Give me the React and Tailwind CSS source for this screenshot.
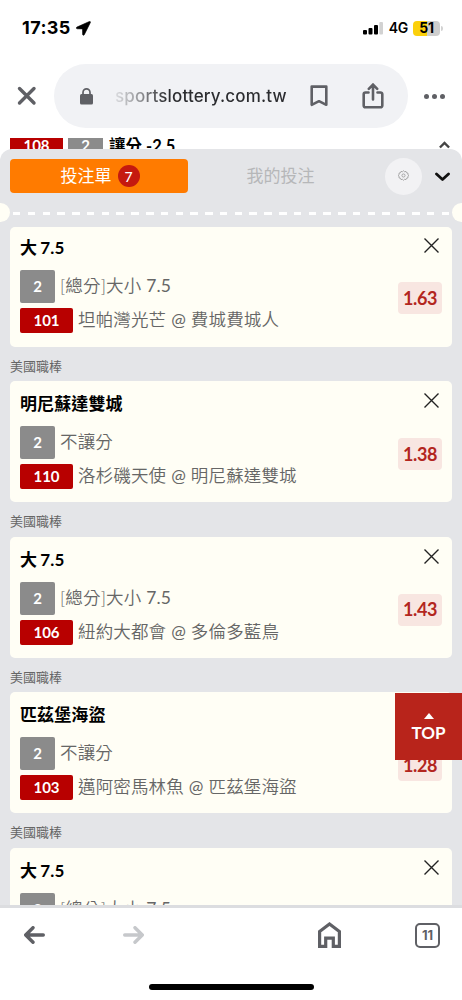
import clsx from "clsx";

const bets = [
  { id: 1, title: "大 7.5", market: "[總分]大小 7.5", code: "101", match: "坦帕灣光芒 @ 費城費城人", odds: "1.63" },
  { id: 2, title: "明尼蘇達雙城", market: "不讓分", code: "110", match: "洛杉磯天使 @ 明尼蘇達雙城", odds: "1.38" },
  { id: 3, title: "大 7.5", market: "[總分]大小 7.5", code: "106", match: "紐約大都會 @ 多倫多藍鳥", odds: "1.43" },
  { id: 4, title: "匹茲堡海盜", market: "不讓分", code: "103", match: "邁阿密馬林魚 @ 匹茲堡海盜", odds: "1.28" },
  { id: 5, title: "大 7.5", market: "[總分]大小 7.5" }
];

function StatusBar() {
  return (
    <div className="flex h-14 shrink-0 items-center pl-[22px] pr-[19px] text-black">
      <span className="text-[18px] font-bold leading-none tracking-[0.4px]">17:35</span>
      <svg className="ml-[5px] h-[15px] w-[15px]" viewBox="0 0 15 15" fill="#000">
        <path d="M13.400.5.9 6.100c-.9.400-.7 1.700.3 1.700l5.300.1.1 5.400c0 1 1.300 1.300 1.700.4L14.400 1.500c.3-.7-.3-1.300-1-1z" stroke="#000" strokeWidth=".6" />
      </svg>
      <svg className="ml-auto h-[14px] w-[20px]" viewBox="0 0 20 14">
        <rect x="0" y="9" width="4" height="4.500" rx="1" />
        <rect x="5.500" y="7" width="4" height="6.500" rx="1" />
        <rect x="11" y="4" width="4" height="9.500" rx="1" />
        <rect x="16.300" y="1" width="3.700" height="12.500" rx="1" fill="#d2d2d2" />
      </svg>
      <span className="ml-[6px] text-[14px] font-semibold leading-none tracking-[-0.3px]">4G</span>
      <div className="ml-[5px] flex h-[15px] w-[27px] items-center justify-center rounded-[4px] bg-[linear-gradient(90deg,#fbd00c_52%,#cecece_52%)] text-[14px] font-bold leading-none tracking-[-0.3px]">
        51
      </div>
      <div className="ml-px h-[5px] w-[2px] rounded-r bg-[#d2d2d2]" />
    </div>
  );
}

function AddressBar() {
  return (
    <div className="flex h-[82px] shrink-0 items-center pb-[2px]">
      <svg className="ml-[17px] h-[20px] w-[20px]" viewBox="0 0 20 20" stroke="#5f6065" strokeWidth="3.400" strokeLinecap="round">
        <path d="M2.500 2.500l14.500 14.500M17 2.500 2.500 17" />
      </svg>
      <div className="ml-[17px] flex h-16 w-[354px] items-center rounded-full bg-[#f1f2f5]">
        <svg className="ml-[26px] h-[17px] w-[13px]" viewBox="0 0 13 17">
          <rect y="6" width="13" height="10.500" rx="1.500" fill="#5f6065" />
          <path d="M3 6.500V4.400a3.500 3.500 0 0 1 7 0v2.100" fill="none" stroke="#5f6065" strokeWidth="1.700" />
        </svg>
        <span className="ml-[22px] w-[173px] whitespace-nowrap bg-[linear-gradient(90deg,#dcdde0_0%,#96979a_14%,#2b2c2f_30%)] bg-clip-text text-[17px] font-medium leading-6 tracking-[0.16px] text-transparent">
          sportslottery.com.tw
        </span>
        <svg className="ml-[22px] h-[22px] w-[18px]" viewBox="0 0 18 22" fill="none" stroke="#5f6065" strokeWidth="2.600" strokeLinejoin="round">
          <path d="M1.700 1.600h14.600v18.200L9 16.200l-7.300 3.600z" />
        </svg>
        <svg className="ml-[34px] h-[26px] w-[22px]" viewBox="0 0 22 26" fill="none" stroke="#5f6065" strokeWidth="2.600" strokeLinecap="round">
          <path d="M6.500 9.500h-3a1.800 1.800 0 0 0-1.800 1.800v11.200a1.800 1.800 0 0 0 1.800 1.800h15a1.800 1.800 0 0 0 1.800-1.800V11.300a1.800 1.800 0 0 0-1.800-1.800h-3M11 16.500V2M6.800 5.800 11 1.600l4.200 4.200" />
        </svg>
      </div>
      <div className="ml-[16px] flex gap-[3px]">
        <i className="size-[5px] rounded-full bg-[#5f6065]" />
        <i className="size-[5px] rounded-full bg-[#5f6065]" />
        <i className="size-[5px] rounded-full bg-[#5f6065]" />
      </div>
    </div>
  );
}

// strip of the page left visible above the sheet
function PageStrip() {
  return (
    <div className="flex h-[26px] shrink-0 pl-[10px] pr-[11px] font-['Lato','Noto_Sans_CJK_TC',sans-serif] text-white">
      <span className="h-6 w-[53px] bg-[#b80000] text-center text-[15px] font-bold leading-[15px]">108</span>
      <span className="ml-[5px] h-6 w-[35px] bg-[#8b8b8b] text-center text-[15px] font-bold leading-[15px]">2</span>
      <span className="ml-[6px] text-[16.500px] font-bold leading-[16px] text-black">讓分 -2.5</span>
      <svg className="ml-auto mr-[1px] mt-[3px] h-[8px] w-[11px]" viewBox="0 0 12 8" fill="none" stroke="#444" strokeWidth="2.600">
        <path d="M1 6.700 6 1.700l5 5" />
      </svg>
    </div>
  );
}

function SlipHeader() {
  return (
    <>
      <div className="flex h-[54px] shrink-0 items-center pl-[10px] pr-[11px]">
        <div className="flex h-[34px] w-[178px] items-center justify-center rounded-[4px] bg-[#ff7b00] text-[17px] text-white">
          <span className="ml-[2px]">投注單</span>
          <span className="ml-[6px] flex size-[22px] items-center justify-center rounded-full bg-[#c5190f] text-[14px] font-medium">7</span>
        </div>
        <div className="w-[185px] text-center text-[17px] text-[#b6b7b9]">我的投注</div>
        <div className="ml-[12px] flex size-[37px] shrink-0 items-center justify-center rounded-full bg-[#f2f2f4]">
          <svg className="mb-[2px] mr-px size-[11px]" viewBox="0 0 12 12" fill="none" stroke="#999" strokeWidth=".9" strokeLinejoin="round">
            <path d="m6 .8 1.200 1.100 1.500-.4.600 1.500 1.600.4-.2 1.500L12 6l-1.300 1.100.2 1.500-1.600.4-.6 1.500-1.500-.4L6 11.200l-1.200-1.100-1.500.4L2.700 9l-1.600-.4.200-1.500L0 6l1.300-1.100-.2-1.500L2.700 3l.6-1.500 1.500.4z" />
            <circle cx="6" cy="6" r="1.700" />
          </svg>
        </div>
        <svg className="ml-auto mr-px mt-px h-[10px] w-[15px]" viewBox="0 0 15 10" fill="none" stroke="#111" strokeWidth="2.800" strokeLinecap="round" strokeLinejoin="round">
          <path d="M1.500 2 7.500 7.500l6-5.500" />
        </svg>
      </div>
      <div className="flex h-[19px] shrink-0 items-center">
        <i className="h-[19px] w-[10px] rounded-r-full bg-[#fffef5]" />
        <div className="ml-[3px] mt-[2px] h-[3px] w-[439px] bg-[repeating-linear-gradient(90deg,#fff_0px,#fff_7.500px,transparent_7.500px,transparent_14.780px)]" />
        <i className="h-[19px] w-[10px] rounded-l-full bg-[#fffef5]" />
      </div>
    </>
  );
}

// Latin runs are set one weight heavier than the CJK around them
function DetailText({ text }) {
  return (
    <span className="-mt-px ml-[5px] whitespace-pre text-[17.500px] font-[350] leading-6 tracking-[0.15px] text-[#666]">
      {text.split(/([\d.@]+)/).map((part, i) =>
        i % 2 ? (
          <span key={i} className="font-normal">
            {part}
          </span>
        ) : (
          part
        )
      )}
    </span>
  );
}

function BetCard({ bet, first }) {
  return (
    <div
      className={clsx(
        "relative shrink-0 rounded-[5px] bg-[#fffef5] px-[10px]",
        first ? "h-[120px] pt-[7px]" : "h-[121px] pt-[9px]"
      )}
    >
      <div className="h-[36px] text-[17px] font-bold leading-[27px] tracking-[0.1px] text-black [word-spacing:-1px]">{bet.title}</div>
      <div className="flex h-[33px] items-center">
        <span className="flex h-[33px] w-[35px] items-center justify-center rounded-[2px] bg-[#8b8b8b] text-[15px] font-bold text-white">2</span>
        <DetailText text={bet.market} />
      </div>
      {bet.code && (
        <div className="mt-[5px] flex h-[25px] items-center">
          <span className="flex h-[25px] w-[53px] items-center justify-center rounded-[2px] bg-[#b80000] text-[15px] font-bold text-white">{bet.code}</span>
          <DetailText text={bet.match} />
        </div>
      )}
      <svg className={clsx("absolute right-[13px] size-[15px]", first ? "top-[11px]" : "top-[12px]")} viewBox="0 0 15 15" stroke="#222" strokeWidth="1.400">
        <path d="M.5.5l14 14M14.500.5l-14 14" />
      </svg>
      {bet.odds && (
        <div
          className={clsx(
            "absolute right-[10px] flex h-[32px] w-[44px] items-center justify-center rounded-[4px] bg-[#f8e6e1] text-[18px] font-bold tracking-[-0.4px] text-[#b3261e]",
            first ? "top-[55px]" : "top-[57px]"
          )}
        >
          {bet.odds}
        </div>
      )}
    </div>
  );
}

function BetSlip() {
  return (
    <div className="relative flex h-[756px] shrink-0 flex-col overflow-hidden rounded-t-[12px] bg-[#e4e5e8] font-['Lato','Noto_Sans_CJK_TC',sans-serif]">
      <SlipHeader />
      <div className="mt-[5px] flex flex-col px-[10px]">
        {bets.map((bet, i) => (
          <div key={bet.id} className="flex flex-col">
            {i > 0 && (
              <div className={clsx("pt-[8px] text-[13px] leading-[22px] text-[#666]", i === 1 ? "h-[34px]" : "h-[34.600px]")}>美國職棒</div>
            )}
            <BetCard bet={bet} first={i === 0} />
          </div>
        ))}
      </div>
      <div className="absolute right-0 top-[544px] flex h-[67px] w-[67px] flex-col items-center bg-[#b8241b] pt-[20px] text-white">
        <svg className="h-[6px] w-[10px]" viewBox="0 0 10 6" fill="#fff">
          <path d="M0 6 5 0l5 6z" />
        </svg>
        <span className="mt-[3px] text-[17px] font-bold leading-[22px]">TOP</span>
      </div>
    </div>
  );
}

function BottomBar() {
  return (
    <div className="flex grow flex-col border-t-[3px] border-[#dcdde0] bg-white">
      <div className="mt-[14px] flex h-[26px] items-center">
        <svg className="ml-[24px] h-[18px] w-[21px]" viewBox="0 0 21 18" fill="none" stroke="#5f6065" strokeWidth="3.400" strokeLinecap="round" strokeLinejoin="round">
          <path d="M19.300 9H2M9 1.700 1.700 9 9 16.300" />
        </svg>
        <svg className="ml-[78px] h-[18px] w-[21px]" viewBox="0 0 21 18" fill="none" stroke="#c6c8cb" strokeWidth="3.400" strokeLinecap="round" strokeLinejoin="round">
          <path d="M1.700 9H19M12 1.700 19.300 9 12 16.300" />
        </svg>
        <svg className="ml-[174px] h-[26px] w-[23px]" viewBox="0 0 23 26" fill="none" stroke="#5f6065" strokeWidth="3.200">
          <path d="M1.600 24.400V9.500l9.900-7.500 9.900 7.500v14.900h-6.100v-8.300H7.700v8.300z" />
        </svg>
        <div className="ml-[74px] flex size-[25px] items-center justify-center rounded-[5px] border-2 border-[#5f6065] text-[13px] font-bold leading-none text-[#5f6065]">
          11
        </div>
      </div>
      <div className="mx-auto mb-[10px] mt-auto h-[6px] w-[165px] rounded-full bg-black" />
    </div>
  );
}

export default function App() {
  return (
    <div className="flex h-[1000px] w-[462px] flex-col overflow-hidden bg-white font-['Inter',sans-serif]">
      <StatusBar />
      <AddressBar />
      {/* the sheet's rounded top overlaps the strip */}
      <div className="-mb-[15px] h-[26px]">
        <PageStrip />
      </div>
      <BetSlip />
      <BottomBar />
    </div>
  );
}
